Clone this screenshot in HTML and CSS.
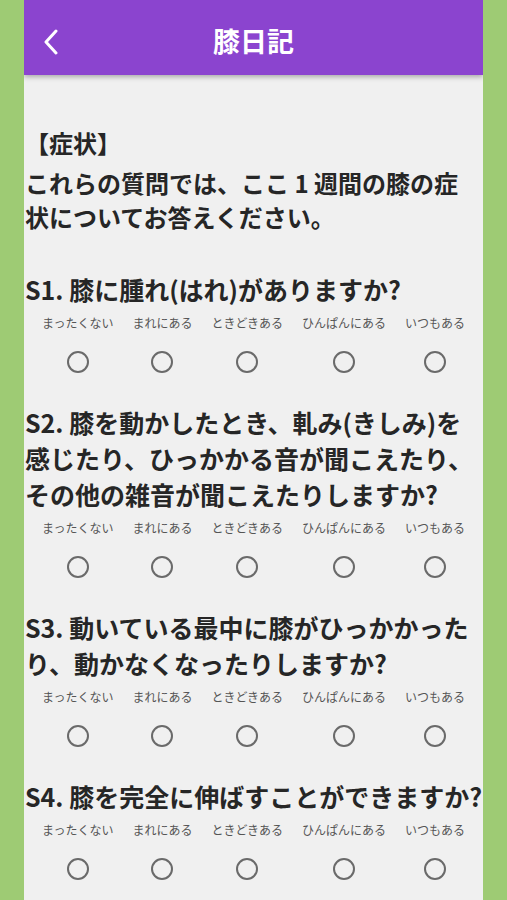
FILE: index.html
```html
<!DOCTYPE html>
<html lang="ja">
<head>
  <meta charset="UTF-8">
  <meta name="viewport" content="width=device-width, initial-scale=1.0">
  <title>膝日記</title>
  <link rel="stylesheet" href="styles.css">
</head>
<body>
<div class="screen">
  <header class="topbar">
    <a class="back" href="#">
      <svg width="16" height="26" viewBox="0 0 16 26"><path d="M12 2 L2 13 L12 24" fill="none" stroke="#fff" stroke-width="3" stroke-linecap="round" stroke-linejoin="round"/></svg>
    </a>
    <h1 class="title">膝日記</h1>
    <span></span>
  </header>

  <main class="content">
    <div class="section-title">【症状】</div>
    <p class="intro">これらの質問では、ここ 1 週間の膝の症状についてお答えください。</p>

    <div class="question">
      <p class="q-text">S1. 膝に腫れ(はれ)がありますか?</p>
      <div class="options">
        <label class="option"><span>まったくない</span><input type="radio" name="s1"></label>
        <label class="option"><span>まれにある</span><input type="radio" name="s1"></label>
        <label class="option"><span>ときどきある</span><input type="radio" name="s1"></label>
        <label class="option"><span>ひんぱんにある</span><input type="radio" name="s1"></label>
        <label class="option"><span>いつもある</span><input type="radio" name="s1"></label>
      </div>
    </div>

    <div class="question">
      <p class="q-text">S2. 膝を動かしたとき、軋み(きしみ)を感じたり、ひっかかる音が聞こえたり、その他の雑音が聞こえたりしますか?</p>
      <div class="options">
        <label class="option"><span>まったくない</span><input type="radio" name="s2"></label>
        <label class="option"><span>まれにある</span><input type="radio" name="s2"></label>
        <label class="option"><span>ときどきある</span><input type="radio" name="s2"></label>
        <label class="option"><span>ひんぱんにある</span><input type="radio" name="s2"></label>
        <label class="option"><span>いつもある</span><input type="radio" name="s2"></label>
      </div>
    </div>

    <div class="question">
      <p class="q-text">S3. 動いている最中に膝がひっかかったり、動かなくなったりしますか?</p>
      <div class="options">
        <label class="option"><span>まったくない</span><input type="radio" name="s3"></label>
        <label class="option"><span>まれにある</span><input type="radio" name="s3"></label>
        <label class="option"><span>ときどきある</span><input type="radio" name="s3"></label>
        <label class="option"><span>ひんぱんにある</span><input type="radio" name="s3"></label>
        <label class="option"><span>いつもある</span><input type="radio" name="s3"></label>
      </div>
    </div>

    <div class="question">
      <p class="q-text">S4. 膝を完全に伸ばすことができますか?</p>
      <div class="options">
        <label class="option"><span>まったくない</span><input type="radio" name="s4"></label>
        <label class="option"><span>まれにある</span><input type="radio" name="s4"></label>
        <label class="option"><span>ときどきある</span><input type="radio" name="s4"></label>
        <label class="option"><span>ひんぱんにある</span><input type="radio" name="s4"></label>
        <label class="option"><span>いつもある</span><input type="radio" name="s4"></label>
      </div>
    </div>
  </main>
</div>
</body>
</html>
```

FILE: styles.css
```css
body {
  margin: 0;
  background-color: #9ecb74;
  font-family: "Noto Sans CJK JP", "Noto Sans", sans-serif;
  color: #262626;
}
.screen {
  width: 459px;
  margin: 0 auto;
  min-height: 100vh;
  background-color: #f0f0f0;
  overflow: hidden;
}
.topbar {
  height: 75px;
  display: grid;
  grid-template-columns: 60px 1fr 60px;
  align-items: center;
  background-color: #8b44cf;
  box-shadow: 0 2px 5px rgba(0, 0, 0, 0.3);
  position: relative;
}
.back {
  display: flex;
  padding-left: 20px;
  padding-top: 8px;
}
.title {
  margin: 0;
  text-align: center;
  color: white;
  font-size: 27px;
  font-weight: bold;
  line-height: 1;
  padding-top: 6px;
}
.content {
  padding: 50px 1px 40px 1px;
}
.section-title {
  font-size: 24px;
  font-weight: bold;
  line-height: 35px;
  margin-bottom: 6px;
}
.intro {
  margin: 0 0 37px 0;
  font-size: 24px;
  font-weight: bold;
  line-height: 34px;
}
.question {
  margin-bottom: 31px;
}
.q-text {
  margin: 0 0 7px 0;
  font-size: 25px;
  font-weight: bold;
  line-height: 36px;
}
.options {
  display: flex;
  justify-content: center;
  gap: 19px;
}
.option {
  display: flex;
  flex-direction: column;
  align-items: center;
  font-size: 12px;
  line-height: 17px;
  color: #555;
}
.option input {
  appearance: none;
  -webkit-appearance: none;
  margin: 20px 0 0 0;
  width: 22px;
  height: 22px;
  border: 2px solid #6a6a6a;
  border-radius: 50%;
  background: transparent;
}
```
